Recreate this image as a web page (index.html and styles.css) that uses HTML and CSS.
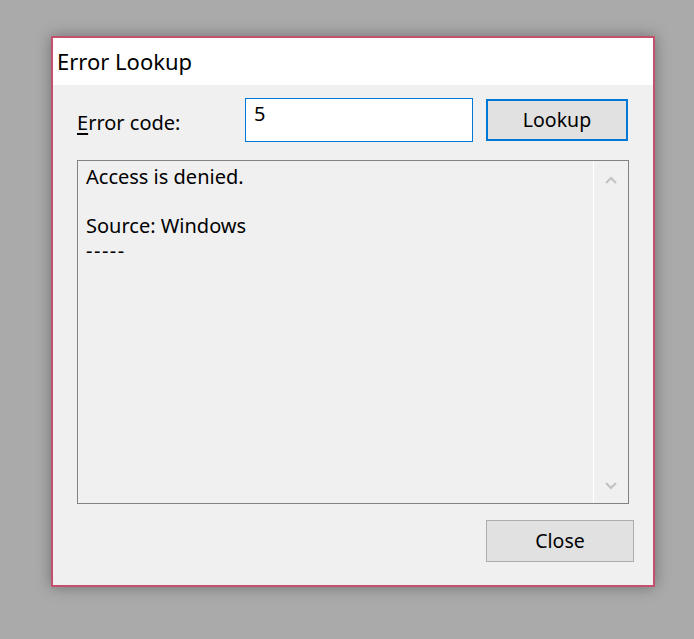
FILE: index.html
```html
<!DOCTYPE html>
<html>
<head>
<meta charset="utf-8">
<link rel="stylesheet" href="styles.css">
</head>
<body>
<div class="window">
  <div class="titlebar">Error Lookup</div>
  <div class="client">
    <div class="row">
      <label class="label"><u>E</u>rror code:</label>
      <div class="input">5</div>
      <div class="btn btn-default">Lookup</div>
    </div>
    <div class="output">
      <div class="output-text">
        <div class="line">Access is denied.</div>
        <div class="line"></div>
        <div class="line">Source: Windows</div>
        <div class="line dashes">-----</div>
      </div>
      <div class="scrollbar">
        <svg class="arrow" width="14" height="10" viewBox="0 0 14 10"><path d="M2 8 L7 3 L12 8" fill="none" stroke="#c2c2c2" stroke-width="2.2"/></svg>
        <svg class="arrow" width="14" height="10" viewBox="0 0 14 10"><path d="M2 2 L7 7 L12 2" fill="none" stroke="#c2c2c2" stroke-width="2.2"/></svg>
      </div>
    </div>
    <div class="footer">
      <div class="btn btn-close">Close</div>
    </div>
  </div>
</div>
</body>
</html>
```
FILE: styles.css
```css
html, body {
  margin: 0;
  padding: 0;
}
body {
  background: #aaaaaa;
  width: 694px;
  height: 639px;
  overflow: hidden;
  font-family: "Noto Sans", "Open Sans", sans-serif;
  color: #000;
  padding-top: 36px;
  box-sizing: border-box;
}
.window {
  margin-left: 51px;
  width: 604px;
  height: 551px;
  box-sizing: border-box;
  border: 2px solid #c3516c;
  background: #f0f0f0;
  box-shadow: 0 0 14px rgba(0,0,0,0.35);
  display: flex;
  flex-direction: column;
}
.titlebar {
  height: 47px;
  background: #fff;
  font-size: 22px;
  line-height: 47px;
  padding-left: 4px;
  flex: none;
}
.client {
  flex: 1;
  display: flex;
  flex-direction: column;
  padding: 13px 0 0 24px;
}
.row {
  display: flex;
  align-items: center;
  height: 44px;
}
.label {
  width: 168px;
  font-size: 20px;
  padding-top: 4px;
}
.label u {
  text-underline-offset: 3px;
}
.input {
  width: 228px;
  height: 44px;
  box-sizing: border-box;
  border: 1px solid #0078d7;
  background: #fff;
  font-size: 20px;
  padding: 2px 0 0 8px;
  line-height: 26px;
}
.btn {
  box-sizing: border-box;
  background: #e1e1e1;
  font-size: 19.5px;
  display: flex;
  align-items: center;
  justify-content: center;
  height: 42px;
  padding-bottom: 2px;
}
.btn-default {
  margin-left: 13px;
  width: 142px;
  border: 2px solid #0078d7;
}
.output {
  margin-top: 18px;
  width: 552px;
  height: 344px;
  box-sizing: border-box;
  border: 1px solid #828282;
  display: flex;
}
.output-text {
  flex: 1;
  font-size: 20px;
  padding: 4px 0 0 8px;
  border-right: 1px solid #fff;
}
.line {
  height: 24.5px;
  line-height: 24px;
}
.dashes {
  letter-spacing: 1.5px;
}
.scrollbar {
  width: 34px;
  display: flex;
  flex-direction: column;
  justify-content: space-between;
  align-items: center;
  padding: 14px 0 12px;
}
.arrow {
  display: block;
}
.footer {
  display: flex;
  justify-content: flex-end;
  padding-right: 19px;
  margin-top: 16px;
}
.btn-close {
  width: 148px;
  border: 1px solid #adadad;
}
```
